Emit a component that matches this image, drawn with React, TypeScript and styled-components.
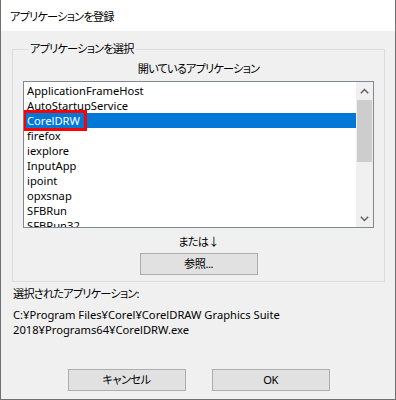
import React from "react";
import styled, { createGlobalStyle } from "styled-components";

const Global = createGlobalStyle`
  html, body { margin: 0; padding: 0; background: #f0f0f0; }
  * { box-sizing: border-box; }
`;

const FONT = `"Noto Sans", "Noto Sans CJK JP", sans-serif`;

const Window = styled.div`
  width: 396px;
  height: 400px;
  background: #f0f0f0;
  border-left: 1px solid #707070;
  border-right: 1px solid #707070;
  border-bottom: 1px solid #707070;
  display: flex;
  flex-direction: column;
  font-family: ${FONT};
  font-size: 11.2px;
  color: #000;
  font-feature-settings: "palt";
`;

const TitleBar = styled.div`
  height: 31px;
  background: #fff;
  display: flex;
  align-items: center;
  padding-left: 9px;
  letter-spacing: -0.8px;
`;

const Body = styled.div`
  display: flex;
  flex-direction: column;
  padding: 0 10px 0 11px;
`;

const Group = styled.fieldset`
  margin: 10px 0 0 0;
  padding: 0 10px 6px 10px;
  border: 1px solid #dcdcdc;
  display: flex;
  flex-direction: column;
  min-width: 0;
`;

const Legend = styled.legend`
  margin-left: 5px;
  padding: 0 2px;
  line-height: 16px;
  letter-spacing: -0.8px;
`;

const Caption = styled.div<{ $top: number }>`
  margin-top: ${(p) => p.$top}px;
  line-height: 16px;
  text-align: center;
  letter-spacing: -0.8px;
`;

const ListBox = styled.div`
  position: relative;
  margin-top: 4px;
  height: 147px;
  border: 1px solid #828790;
  background: #fff;
  display: flex;
  overflow: hidden;
`;

const Items = styled.div`
  flex: 1;
  padding-top: 1px;
  display: flex;
  flex-direction: column;
`;

const Item = styled.div<{ $sel?: boolean }>`
  height: 15px;
  flex: none;
  line-height: 15px;
  padding-left: 3px;
  white-space: nowrap;
  background: ${(p) => (p.$sel ? "#0078d7" : "transparent")};
  color: ${(p) => (p.$sel ? "#fff" : "#000")};
`;

const Scroll = styled.div`
  width: 17px;
  flex: none;
  background: #f0f0f0;
  display: flex;
  flex-direction: column;
`;

const Arrow = styled.div`
  height: 17px;
  flex: none;
  display: flex;
  align-items: center;
  justify-content: center;
`;

const Track = styled.div`
  flex: 1;
  display: flex;
  flex-direction: column;
`;

const Thumb = styled.div`
  height: 62px;
  margin: 1px 1px 0 1px;
  background: #cdcdcd;
`;

const Highlight = styled.div`
  position: absolute;
  left: -1px;
  top: 28px;
  width: 64px;
  height: 21px;
  border: 3px solid #ff0000;
  pointer-events: none;
`;

const Button = styled.button<{ $w: number }>`
  width: ${(p) => p.$w}px;
  height: 22px;
  background: #e1e1e1;
  border: 1px solid #adadad;
  font-family: ${FONT};
  font-size: 11.2px;
  font-feature-settings: "palt";
  letter-spacing: -0.5px;
  color: #000;
  padding: 0;
  line-height: 18px;
`;

const Center = styled.div<{ $top: number }>`
  display: flex;
  justify-content: center;
  margin-top: ${(p) => p.$top}px;
`;

const Label = styled.div<{ $top: number; $lh: number; $jp?: boolean }>`
  margin-top: ${(p) => p.$top}px;
  line-height: ${(p) => p.$lh}px;
  padding-left: 1px;
  letter-spacing: ${(p) => (p.$jp ? "-0.8px" : "0")};
`;

const ButtonRow = styled.div`
  display: flex;
  justify-content: center;
  gap: 26px;
  margin-top: 32px;
`;

const Arrowhead = ({ up }: { up?: boolean }) => (
  <svg width="9" height="6" viewBox="0 0 9 6">
    <path
      d={up ? "M0.8 5.2 L4.5 1.5 L8.2 5.2" : "M0.8 0.8 L4.5 4.5 L8.2 0.8"}
      fill="none"
      stroke="#606060"
      strokeWidth="1.5"
    />
  </svg>
);

const apps = [
  "ApplicationFrameHost",
  "AutoStartupService",
  "CorelDRW",
  "firefox",
  "iexplore",
  "InputApp",
  "ipoint",
  "opxsnap",
  "SFBRun",
  "SFBRun32",
];

export default function App() {
  return (
    <>
      <Global />
      <Window>
        <TitleBar>アプリケーションを登録</TitleBar>
        <Body>
          <Group>
            <Legend>アプリケーションを選択</Legend>
            <Caption $top={4}>開いているアプリケーション</Caption>
            <ListBox>
              <Items>
                {apps.map((a) => (
                  <Item key={a} $sel={a === "CorelDRW"}>
                    {a}
                  </Item>
                ))}
              </Items>
              <Scroll>
                <Arrow>
                  <Arrowhead up />
                </Arrow>
                <Track>
                  <Thumb />
                </Track>
                <Arrow>
                  <Arrowhead />
                </Arrow>
              </Scroll>
              <Highlight />
            </ListBox>
            <Caption $top={6}>または↓</Caption>
            <Center $top={3}>
              <Button $w={118}>参照...</Button>
            </Center>
          </Group>
          <Label $top={4} $lh={16} $jp>選択されたアプリケーション:</Label>
          <Label $top={5} $lh={15}>
            C:¥Program Files¥Corel¥CorelDRAW Graphics Suite
            <br />
            2018¥Programs64¥CorelDRW.exe
          </Label>
          <ButtonRow>
            <Button $w={118}>キャンセル</Button>
            <Button $w={118}>OK</Button>
          </ButtonRow>
        </Body>
      </Window>
    </>
  );
}
